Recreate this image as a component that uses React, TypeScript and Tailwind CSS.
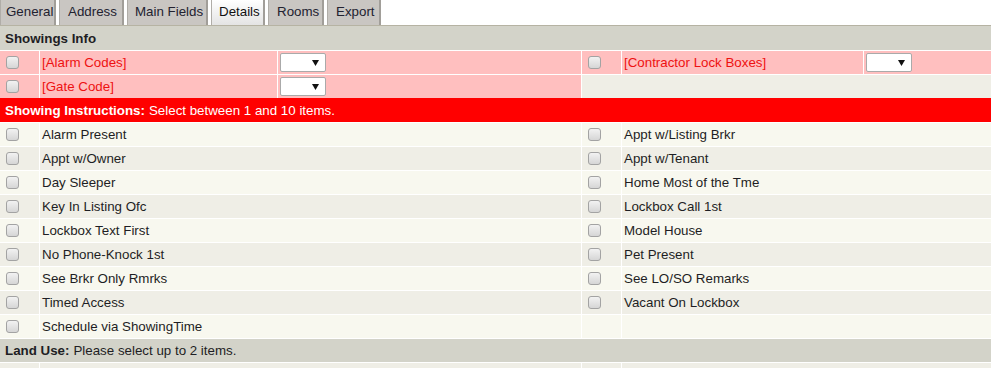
import React from "react";

const Checkbox = () => (
  <div className="w-[13px] h-[13px] rounded-[3px] border border-[#a3a3a3] bg-gradient-to-b from-[#f2f2f2] to-[#d6d6d6] shrink-0" />
);

const Select = () => (
  <div className="w-[46px] h-[19px] bg-white border border-[#aaaaaa] rounded-[2px] flex items-center justify-end pr-[6px]">
    <svg width="7" height="6" viewBox="0 0 7 6">
      <polygon points="0,0 7,0 3.5,6" fill="#111" />
    </svg>
  </div>
);

const tabs = [
  { name: "General", w: "w-[56px]", pl: "pl-[5px]", active: false },
  { name: "Address", w: "w-[65px]", pl: "pl-[8px]", active: false },
  { name: "Main Fields", w: "w-[81px]", pl: "pl-[7px]", active: false },
  { name: "Details", w: "w-[54px]", pl: "pl-[7px]", active: true },
  { name: "Rooms", w: "w-[56px]", pl: "pl-[8px]", active: false },
  { name: "Export", w: "w-[54px]", pl: "pl-[8px]", active: false },
];

const left = [
  "Alarm Present",
  "Appt w/Owner",
  "Day Sleeper",
  "Key In Listing Ofc",
  "Lockbox Text First",
  "No Phone-Knock 1st",
  "See Brkr Only Rmrks",
  "Timed Access",
  "Schedule via ShowingTime",
];
const right = [
  "Appt w/Listing Brkr",
  "Appt w/Tenant",
  "Home Most of the Tme",
  "Lockbox Call 1st",
  "Model House",
  "Pet Present",
  "See LO/SO Remarks",
  "Vacant On Lockbox",
  "",
];

export default function App() {
  return (
    <div className="w-[991px] h-[368px] overflow-hidden bg-white font-['Liberation_Sans',Arial,sans-serif] text-[13.33px] leading-[15px] text-[#1e1e24]">
      {/* Tabs */}
      <div className="flex h-[25px]">
        {tabs.map((t) => (
          <div
            key={t.name}
            className={`${t.w} ${t.pl} mr-[3px] flex items-center pb-[2px] border-l border-l-[#b0ada8] border-r-2 border-r-[#a19e99] ${
              t.active
                ? "bg-gradient-to-b from-white to-[#e4e4e4] text-[#111]"
                : "bg-[#c9c6c2] text-[#222230]"
            }`}
          >
            {t.name}
          </div>
        ))}
      </div>
      <div className="h-[1px] bg-[#b6b3a3]" />

      {/* Showings Info header */}
      <div className="h-[24px] bg-[#d3d3c9] flex items-center pl-[5px] font-bold text-[#1e1e24]">
        Showings Info
      </div>

      {/* Pink rows */}
      <div className="mt-[1px] grid grid-cols-[39px_237px_303px_39px_241px_1fr] gap-[1px] text-[#ee1111]">
        <div className="h-[23px] bg-[#ffbfbf] flex items-center pl-[6px]">
          <Checkbox />
        </div>
        <div className="bg-[#ffbfbf] flex items-center pl-[2px]">[Alarm Codes]</div>
        <div className="bg-[#ffbfbf] flex items-center pl-[2px]">
          <Select />
        </div>
        <div className="bg-[#ffbfbf] flex items-center pl-[6px]">
          <Checkbox />
        </div>
        <div className="bg-[#ffbfbf] flex items-center pl-[2px]">[Contractor Lock Boxes]</div>
        <div className="bg-[#ffbfbf] flex items-center pl-[2px]">
          <Select />
        </div>

        <div className="h-[23px] bg-[#ffbfbf] flex items-center pl-[6px]">
          <Checkbox />
        </div>
        <div className="bg-[#ffbfbf] flex items-center pl-[2px]">[Gate Code]</div>
        <div className="bg-[#ffbfbf] flex items-center pl-[2px]">
          <Select />
        </div>
        <div className="col-span-3 bg-[#efeee6]" />
      </div>

      {/* Red header */}
      <div className="h-[24px] bg-[#ff0000] flex items-center pl-[5px] text-white">
        <span className="font-bold">Showing Instructions:</span>
        <span className="ml-[4px]">Select between 1 and 10 items.</span>
      </div>

      {/* Items */}
      <div className="mt-[1px] grid grid-cols-[39px_541px_39px_1fr] gap-[1px]">
        {left.map((l, i) => {
          const bg = i % 2 === 0 ? "bg-[#f8f8ef]" : "bg-[#efeee6]";
          const r = right[i];
          return (
            <React.Fragment key={l}>
              <div className={`h-[23px] ${bg} flex items-center pl-[6px]`}>
                <Checkbox />
              </div>
              <div className={`${bg} flex items-center pl-[2px]`}>{l}</div>
              {r ? (
                <>
                  <div className={`${bg} flex items-center pl-[6px]`}>
                    <Checkbox />
                  </div>
                  <div className={`${bg} flex items-center pl-[2px]`}>{r}</div>
                </>
              ) : (
                <>
                  <div className={bg} />
                  <div className={bg} />
                </>
              )}
            </React.Fragment>
          );
        })}
      </div>

      {/* Land Use header */}
      <div className="mt-[1px] h-[23px] bg-[#d3d3c9] flex items-center pl-[5px]">
        <span className="font-bold">Land Use:</span>
        <span className="ml-[4px]">Please select up to 2 items.</span>
      </div>

      <div className="mt-[1px] grid grid-cols-[39px_541px_39px_1fr] gap-[1px]">
        <div className="h-[23px] bg-[#efeee6]" />
        <div className="bg-[#efeee6]" />
        <div className="bg-[#efeee6]" />
        <div className="bg-[#efeee6]" />
      </div>
    </div>
  );
}
